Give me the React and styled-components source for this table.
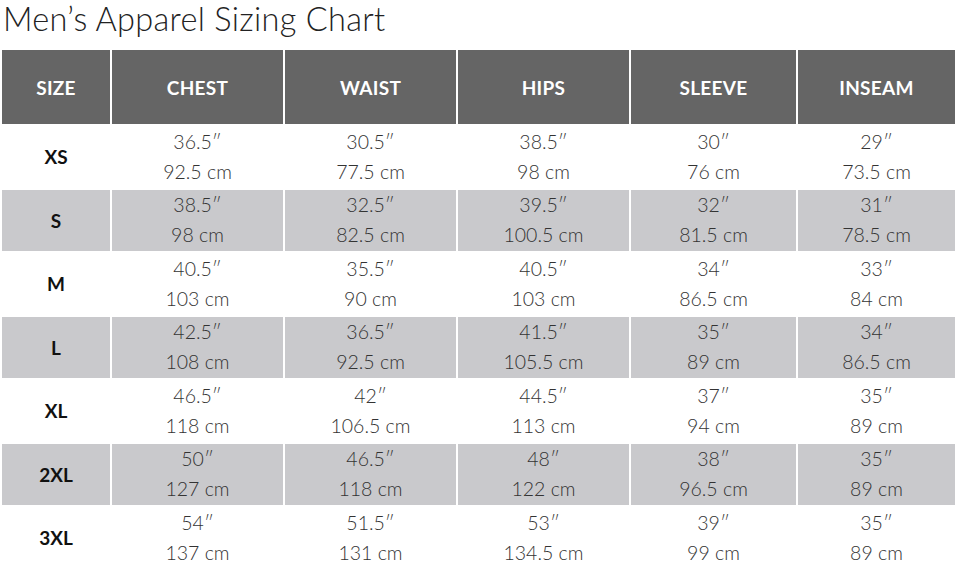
import styled, { createGlobalStyle } from "styled-components";

const GlobalStyle = createGlobalStyle`
  body {
    margin: 0;
    background: #ffffff;
    font-family: "Lato", "Open Sans", sans-serif;
  }
`;

const columns = ["SIZE", "CHEST", "WAIST", "HIPS", "SLEEVE", "INSEAM"];

const rows = [
  ["XS", ["36.5″", "92.5 cm"], ["30.5″", "77.5 cm"], ["38.5″", "98 cm"], ["30″", "76 cm"], ["29″", "73.5 cm"]],
  ["S", ["38.5″", "98 cm"], ["32.5″", "82.5 cm"], ["39.5″", "100.5 cm"], ["32″", "81.5 cm"], ["31″", "78.5 cm"]],
  ["M", ["40.5″", "103 cm"], ["35.5″", "90 cm"], ["40.5″", "103 cm"], ["34″", "86.5 cm"], ["33″", "84 cm"]],
  ["L", ["42.5″", "108 cm"], ["36.5″", "92.5 cm"], ["41.5″", "105.5 cm"], ["35″", "89 cm"], ["34″", "86.5 cm"]],
  ["XL", ["46.5″", "118 cm"], ["42″", "106.5 cm"], ["44.5″", "113 cm"], ["37″", "94 cm"], ["35″", "89 cm"]],
  ["2XL", ["50″", "127 cm"], ["46.5″", "118 cm"], ["48″", "122 cm"], ["38″", "96.5 cm"], ["35″", "89 cm"]],
  ["3XL", ["54″", "137 cm"], ["51.5″", "131 cm"], ["53″", "134.5 cm"], ["39″", "99 cm"], ["35″", "89 cm"]],
];

export default function App() {
  return (
    <Page>
      <GlobalStyle />
      <Title>Men’s Apparel Sizing Chart</Title>
      <Chart>
        {columns.map((c) => (
          <HeadCell key={c}>{c}</HeadCell>
        ))}
        {rows.map(([size, ...values], i) => (
          <Row key={size}>
            <SizeCell $shade={i % 2 === 1}>{size}</SizeCell>
            {values.map(([inch, cm], j) => (
              <ValueCell key={j} $shade={i % 2 === 1}>
                <span>{inch}</span>
                <span>{cm}</span>
              </ValueCell>
            ))}
          </Row>
        ))}
      </Chart>
    </Page>
  );
}

const Page = styled.div`
  width: 959px;
  height: 563px;
  overflow: hidden;
  padding: 0 0 0 2px;
  box-sizing: border-box;
`;

const Title = styled.h1`
  margin: 0;
  padding: 0 0 0 1px;
  height: 50px;
  line-height: 38px;
  font-size: 32.5px;
  font-weight: 300;
  color: #222222;
  letter-spacing: 0.3px;
`;

const Chart = styled.div`
  display: grid;
  grid-template-columns: 108px 171px 171px 171px 165px 157px;
  grid-template-rows: 74px;
  grid-auto-rows: 61.5px;
  gap: 2px;
`;

const Row = styled.div`
  display: contents;
`;

const HeadCell = styled.div`
  background: #656565;
  color: #ffffff;
  font-weight: 700;
  font-size: 19px;
  letter-spacing: 0.3px;
  display: flex;
  align-items: center;
  justify-content: center;
`;

const SizeCell = styled.div`
  background: ${(p) => (p.$shade ? "#c9c9cc" : "#ffffff")};
  color: #111111;
  font-weight: 700;
  font-size: 19px;
  display: flex;
  align-items: center;
  justify-content: center;
`;

const ValueCell = styled.div`
  background: ${(p) => (p.$shade ? "#c9c9cc" : "#ffffff")};
  color: #333333;
  font-weight: 300;
  font-size: 19.5px;
  line-height: 30px;
  display: flex;
  flex-direction: column;
  align-items: center;
  justify-content: center;
`;
